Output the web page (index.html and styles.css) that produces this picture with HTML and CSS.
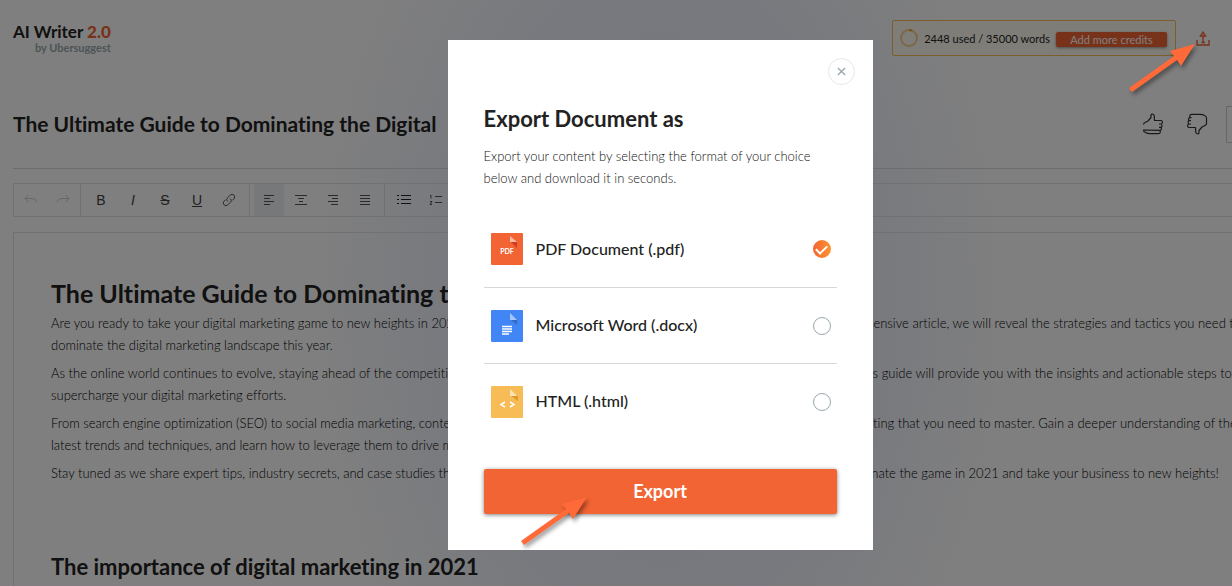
FILE: index.html
```
<!DOCTYPE html>
<html lang="en">
<head>
  <meta charset="UTF-8">
  <meta name="viewport" content="width=device-width, initial-scale=1.0">
  <title>AI Writer 2.0</title>
  <link rel="stylesheet" href="styles.css">
</head>
<body>
  <div class="page">
    <header class="topbar">
      <a class="logo" href="#">
        <span class="logo-name">AI Writer <b>2.0</b></span>
        <span class="logo-by">by Ubersuggest</span>
      </a>
      <div class="topbar-right">
        <div class="credits">
          <svg class="credits-ring" viewBox="0 0 18 18" width="18" height="18" fill="none" stroke-width="2">
            <circle cx="9" cy="9" r="8" stroke="#f5cf92"/>
            <path d="M9 1a8 8 0 0 1 3 .6" stroke="#f2a33a"/>
          </svg>
          <span>2448 used / 35000 words</span>
          <button class="credits-button" type="button">Add more credits</button>
        </div>
        <button class="icon-button share" type="button" aria-label="Export">
          <svg viewBox="0 0 14 15" width="14" height="15" fill="none" stroke="#f26434" stroke-width="1.4">
            <path d="M1 9v5h12V9"/>
            <path d="M7 11.5V5.5M4.5 5 7 1.200 9.500 5zM5.500 11.500H9"/>
          </svg>
        </button>
      </div>
    </header>

    <div class="title-row">
      <h1>The Ultimate Guide to Dominating the Digital</h1>
      <div class="feedback">
        <button class="icon-button" type="button" aria-label="Like">
          <svg class="thumb" viewBox="0 0 22 22" width="22" height="22">
            <path d="M1.500 11.500Q1.500 10.200 3 9.500L6 8 9 4.500V2Q9.300 1 10.500 1 12 1.300 12.300 3.200L12.500 7.500H19Q20.500 7.800 20.500 9.200 20.300 10.800 19 11H17M19 11Q20.300 11.600 20 13 19.700 14.200 18.700 14.300H17M18.700 14.300Q19.700 15 19.400 16.200 19 17.300 18 17.300H16.500M18 17.300Q18.700 18.400 18 19.800 17.300 20.700 16 20.700H8Q5.500 20.700 3.500 19.500 1.500 18.800 1.500 17z"/>
          </svg>
        </button>
        <button class="icon-button" type="button" aria-label="Dislike">
          <svg class="thumb thumb-down" viewBox="0 0 22 22" width="22" height="22">
            <path d="M1.500 11.500Q1.500 10.200 3 9.500L6 8 9 4.500V2Q9.300 1 10.500 1 12 1.300 12.300 3.200L12.500 7.500H19Q20.500 7.800 20.500 9.200 20.300 10.800 19 11H17M19 11Q20.300 11.600 20 13 19.700 14.200 18.700 14.300H17M18.700 14.300Q19.700 15 19.400 16.200 19 17.300 18 17.300H16.500M18 17.300Q18.700 18.400 18 19.800 17.300 20.700 16 20.700H8Q5.500 20.700 3.500 19.500 1.500 18.800 1.500 17V11.500"/>
          </svg>
        </button>
        <button class="more-button" type="button" aria-label="More"></button>
      </div>
    </div>

    <div class="toolbar">
      <div class="tool-group history">
        <button type="button" aria-label="Undo" disabled>
          <svg viewBox="0 0 14 12" width="14" height="12"><path d="M4.500 1 1 4.500 4.500 8M1 4.500h6c3 0 5 1 6 3.500"/></svg>
        </button>
        <button type="button" aria-label="Redo" disabled>
          <svg viewBox="0 0 14 12" width="14" height="12"><path d="M9.500 1 13 4.500 9.500 8M13 4.500H7C4 4.500 2 5.500 1 8"/></svg>
        </button>
      </div>
      <div class="tool-group marks">
        <button type="button" aria-label="Bold">B</button>
        <button type="button" aria-label="Italic"><i>I</i></button>
        <button type="button" aria-label="Strikethrough"><s>S</s></button>
        <button type="button" aria-label="Underline"><u>U</u></button>
        <button type="button" aria-label="Link">
          <svg viewBox="0 0 14 14" width="14" height="14"><path d="M5.600 8.400a2.600 2.600 0 0 1 0-3.700l2.600-2.600a2.600 2.600 0 0 1 3.700 3.700l-1.600 1.600M8.400 5.600a2.600 2.600 0 0 1 0 3.700l-2.600 2.600a2.600 2.600 0 0 1-3.700-3.700l1.600-1.600"/></svg>
        </button>
      </div>
      <div class="tool-group">
        <button class="active" type="button" aria-label="Align left">
          <svg viewBox="0 0 12 12" width="12" height="12"><path d="M1 1.500h10M1 4.500h6M1 7.500h10M1 10.500h6"/></svg>
        </button>
        <button type="button" aria-label="Align center">
          <svg viewBox="0 0 12 12" width="12" height="12"><path d="M0 1.500h12M3 4.500h6M4 7.500h4M0 10.500h12"/></svg>
        </button>
        <button type="button" aria-label="Align right">
          <svg viewBox="0 0 12 12" width="12" height="12"><path d="M1 1.500h10M5 4.500h6M1 7.500h10M4 10.500h7"/></svg>
        </button>
        <button type="button" aria-label="Justify">
          <svg viewBox="0 0 12 12" width="12" height="12"><path d="M1 1.500h10M1 4.500h10M1 7.500h10M1 10.500h10"/></svg>
        </button>
      </div>
      <div class="tool-group">
        <button class="strong" type="button" aria-label="Bulleted list">
          <svg viewBox="0 0 14 12" width="14" height="12"><path d="M4 1.500h10M4 5.500h10M4 9.500h10M0 1.500h2M0 5.500h2M0 9.500h2"/></svg>
        </button>
        <button type="button" aria-label="Numbered list">
          <svg viewBox="0 0 14 12" width="14" height="12"><path d="M6 2.500h7M6 8.500h7M1 1.500h1v3M1 7.500h2l-2 3h2"/></svg>
        </button>
      </div>
    </div>

    <article class="editor">
      <h2>The Ultimate Guide to Dominating the Digital Landscape in 2021</h2>
      <p>Are you ready to take your digital marketing game to new heights in 2021? Look no further, because this guide is made just for you. In this comprehensive article, we will reveal the strategies and tactics you need to<br>
      dominate the digital marketing landscape this year.</p>
      <p>As the online world continues to evolve, staying ahead of the competition is crucial for the continued success of every modern business. Luckily, this guide will provide you with the insights and actionable steps to<br>
      supercharge your digital marketing efforts.</p>
      <p>From search engine optimization (SEO) to social media marketing, content creation and email outreach, we explore every key aspect of digital marketing that you need to master. Gain a deeper understanding of the<br>
      latest trends and techniques, and learn how to leverage them to drive more traffic.</p>
      <p>Stay tuned as we share expert tips, industry secrets, and case studies that will inspire all of your own campaigns and help you to finally go and dominate the game in 2021 and take your business to new heights!</p>
      <h3>The importance of digital marketing in 2021</h3>
    </article>
  </div>

  <div class="overlay">
    <form class="modal" role="dialog" aria-labelledby="modal-title">
      <button class="close" type="button" aria-label="Close">
        <svg viewBox="0 0 10 10" width="9" height="9" fill="none" stroke="#9aa8ad" stroke-width="1.500"><path d="M1 1l8 8M9 1 1 9"/></svg>
      </button>
      <h2 id="modal-title">Export Document as</h2>
      <p>Export your content by selecting the format of your choice below and download it in seconds.</p>

      <div class="formats">
        <label class="format">
          <svg viewBox="0 0 32 32" width="32" height="32">
            <rect width="32" height="32" rx="1" fill="#f26434"/>
            <path d="M19 3v6h7z" fill="#fab9a6"/>
            <path d="M20 9h6v6z" fill="#cf3c1f"/>
            <text class="pdf-label" x="16" y="21" text-anchor="middle">PDF</text>
          </svg>
          <span>PDF Document (.pdf)</span>
          <input type="radio" name="format" value="pdf" checked>
        </label>
        <label class="format">
          <svg viewBox="0 0 32 32" width="32" height="32">
            <rect width="32" height="32" rx="1" fill="#4285f4"/>
            <path d="M19 3v7h7z" fill="#a6c5fa"/>
            <path d="M20 10h6v5z" fill="#3469c4"/>
            <path d="M11 16.500h10M11 19h10M11 21.500h10M11 24h7" stroke="#fff" stroke-width="1.300"/>
          </svg>
          <span>Microsoft Word (.docx)</span>
          <input type="radio" name="format" value="docx">
        </label>
        <label class="format">
          <svg viewBox="0 0 32 32" width="32" height="32">
            <rect width="32" height="32" rx="1" fill="#f7bc55"/>
            <path d="M19 3v7h7z" fill="#fde3b4"/>
            <path d="M20 10h7v5z" fill="#dd9a2c"/>
            <path d="M14 16l-4 2.500 4 2.500M19 16l4 2.500-4 2.500" fill="none" stroke="#fff" stroke-width="1.500"/>
          </svg>
          <span>HTML (.html)</span>
          <input type="radio" name="format" value="html">
        </label>
      </div>

      <button class="export" type="submit">Export</button>
    </form>
  </div>

  <svg class="arrow arrow-share" viewBox="0 0 70 50" width="70" height="50"><path d="M67 1 42 8l4 5L1 45l3 4 45-32 4 6z"/></svg>
  <svg class="arrow arrow-export" viewBox="0 0 70 50" width="70" height="50"><path d="M67 1 42 8l4 5L1 45l3 4 45-32 4 6z"/></svg>
</body>
</html>
```
FILE: styles.css
```
* {
  box-sizing: border-box;
}

body {
  margin: 0;
  font-family: Lato, "Open Sans", sans-serif;
  font-size: 13px;
  font-variant-ligatures: none;
  color: #222;
  background: #fff;
  height: 100vh;
  overflow: hidden;
}

h1, h2, h3, p {
  margin: 0;
}

button {
  font-family: inherit;
  border: none;
  background: none;
  padding: 0;
  cursor: pointer;
}

.page {
  height: 100vh;
  padding: 20px 0 0 13px;
  overflow: hidden;
  background: radial-gradient(ellipse 350px 540px at 660px 300px, #e6ebfb 0%, #f0f3fc 60%, #fff 100%);
}

/* Top bar */
.topbar {
  display: flex;
  justify-content: space-between;
  align-items: flex-start;
  height: 36px;
  padding-right: 22px;
}

.logo {
  display: flex;
  flex-direction: column;
  align-items: flex-end;
  padding-top: 2px;
  color: #222;
  text-decoration: none;
}

.logo-name {
  font-size: 17px;
  line-height: 20px;
  font-weight: 700;
}

.logo-name b {
  color: #f26434;
}

.logo-by {
  font-size: 11px;
  line-height: 11px;
  color: #9aa8ad;
  font-weight: 700;
}

.topbar-right {
  display: flex;
  align-items: center;
  gap: 20px;
}

.credits {
  display: flex;
  align-items: center;
  gap: 6px;
  height: 36px;
  padding: 0 8px 0 7px;
  border: 1px solid #f7bc55;
  border-radius: 2px;
  background: #fffaf0;
  font-size: 11px;
}

.credits-button {
  height: 15px;
  width: 111px;
  margin-top: 3px;
  border-radius: 2px;
  background: #f26434;
  color: #fff;
  font-size: 11px;
  line-height: 13px;
  box-shadow: 0 1px 3px rgba(0, 0, 0, 0.4);
}

.icon-button {
  display: flex;
}

/* Title */
.title-row {
  display: flex;
  justify-content: space-between;
  align-items: center;
  height: 113px;
  padding-top: 24px;
  border-bottom: 1px solid #d5d8da;
}

.title-row h1 {
  font-size: 21px;
  line-height: 30px;
  white-space: nowrap;
}

.feedback {
  display: flex;
  align-items: center;
  gap: 22px;
}

.thumb {
  fill: none;
  stroke: #333;
  stroke-width: 1.2;
  stroke-linejoin: round;
}

.thumb-down {
  transform: rotate(180deg);
}

.more-button {
  width: 6px;
  height: 37px;
  margin-left: -4px;
  border: 1px solid #ccc;
  border-right: none;
  border-radius: 2px 0 0 2px;
}

/* Toolbar */
.toolbar {
  display: flex;
  height: 34px;
  margin-top: 14px;
  border: 1px solid #e0e3e6;
  border-right: none;
}

.tool-group {
  display: flex;
  gap: 2px;
  padding: 0 4px;
  border-right: 1px solid #e0e3e6;
}

.tool-group:last-child {
  border-right: none;
}

.tool-group.history {
  padding: 0 2px;
}

.tool-group.marks {
  padding: 0 5px;
}

.tool-group button {
  display: flex;
  align-items: center;
  justify-content: center;
  width: 30px;
  font-family: "Liberation Sans", sans-serif;
  font-size: 14px;
  color: #444;
}

.tool-group svg {
  fill: none;
  stroke: #555;
}

.tool-group button:disabled svg {
  stroke: #ccc;
}

.tool-group .strong svg {
  stroke: #222;
}

.tool-group .active {
  background: #eef1f5;
}

/* Editor */
.editor {
  margin-top: 15px;
  padding: 42px 0 0 37px;
  border: 1px solid #e0e3e6;
  border-right: none;
  height: 400px;
  white-space: nowrap;
}

.editor h2 {
  margin-bottom: 1px;
  font-size: 25px;
  line-height: 36px;
}

.editor p {
  margin-bottom: 6px;
  line-height: 22px;
  font-weight: 300;
  color: #000;
}

.editor h3 {
  margin-top: 68px;
  font-size: 22px;
  line-height: 30px;
}

/* Export modal */
.overlay {
  position: fixed;
  inset: 0;
  display: flex;
  align-items: flex-start;
  justify-content: center;
  padding: 40px 0 0 88px;
  background: rgba(0, 0, 0, 0.5);
}

.modal {
  display: flex;
  flex-direction: column;
  width: 425px;
  padding: 18px 36px 36px;
  background: #fff;
}

.close {
  display: flex;
  align-items: center;
  justify-content: center;
  align-self: flex-end;
  width: 27px;
  height: 27px;
  margin-right: -18px;
  border: 1px solid #e3e6e8;
  border-radius: 50%;
}

.modal h2 {
  margin-top: 19px;
  font-size: 22px;
  line-height: 30px;
}

.modal p {
  margin-top: 11px;
  line-height: 22px;
  font-weight: 300;
  color: #111;
}

.formats {
  margin: 22px 0 30px;
}

.format {
  display: flex;
  align-items: center;
  gap: 13px;
  height: 76px;
  padding: 0 6px 0 7px;
  font-size: 16px;
  font-weight: 500;
  cursor: pointer;
}

.format + .format {
  border-top: 1px solid #d5d9da;
}

.format span {
  flex: 1;
  padding-bottom: 2px;
}

.pdf-label {
  font-size: 7px;
  font-weight: 700;
  fill: #fff;
}

.format input {
  appearance: none;
  display: flex;
  justify-content: center;
  width: 18px;
  height: 18px;
  margin: 0;
  border: 1px solid #9aa8ad;
  border-radius: 50%;
}

.format input:checked {
  border: none;
  background: linear-gradient(90deg, #f26434, #ff9330);
}

.format input:checked::after {
  content: "";
  width: 5px;
  height: 9px;
  margin-top: 3px;
  border: solid #fff;
  border-width: 0 2px 2px 0;
  transform: rotate(45deg);
}

.export {
  height: 45px;
  padding-bottom: 2px;
  border-radius: 2px;
  background: #f26434;
  color: #fff;
  font-size: 18px;
  font-weight: 700;
  box-shadow: 0 1px 4px rgba(0, 0, 0, 0.5);
}

/* Pointer arrows */
.arrow {
  position: absolute;
  fill: #ff6a38;
  overflow: visible;
  filter: drop-shadow(2px 3px 2px rgba(0, 0, 0, 0.4));
  pointer-events: none;
}

.arrow-share {
  left: 1128px;
  top: 43px;
}

.arrow-export {
  left: 520px;
  top: 496px;
}
```
